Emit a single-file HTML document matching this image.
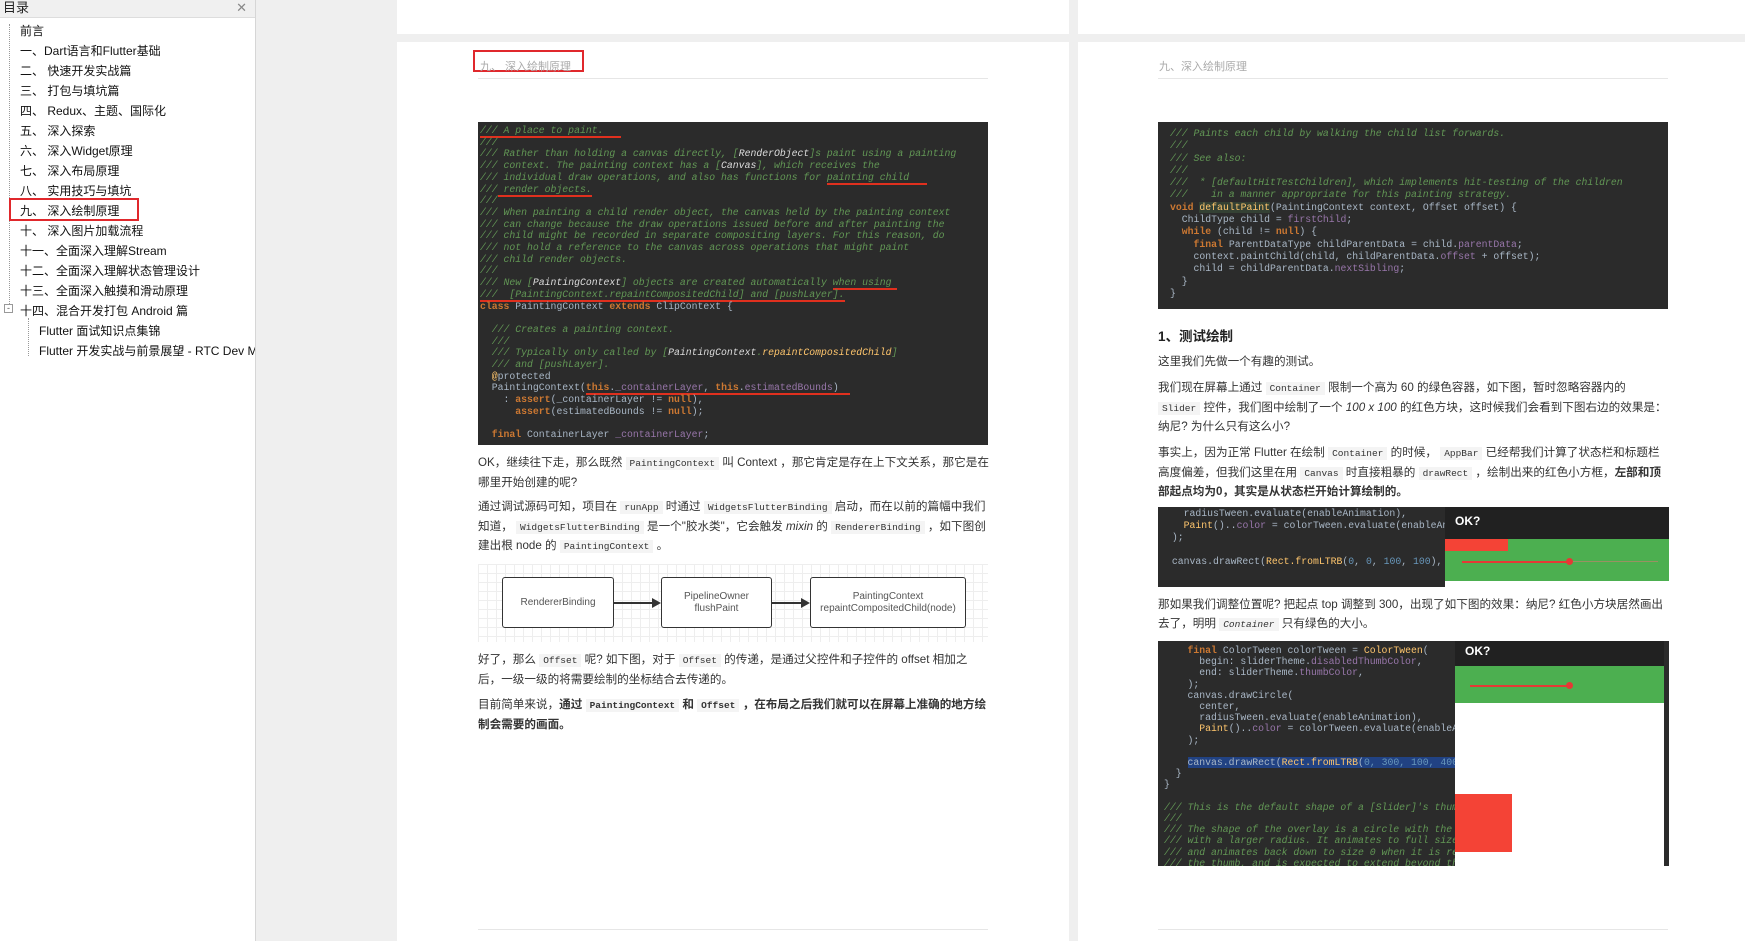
<!DOCTYPE html>
<html><head><meta charset="utf-8">
<style>
*{margin:0;padding:0;box-sizing:border-box}
body{width:1745px;height:941px;overflow:hidden;background:#efefef;font-family:"Liberation Sans","Noto Sans CJK SC",sans-serif;position:relative;color:#333}
.side{position:absolute;left:0;top:0;width:256px;height:941px;background:#fff;border-right:1px solid #d6d6d6;overflow:hidden}
.sh{height:18px;background:#f0f0f0;border-bottom:1px solid #ddd;font-size:13px;line-height:16px;padding-left:3px;color:#222;position:relative}
.sh span{position:absolute;right:8px;top:0;color:#888;font-size:13px}
.it{position:absolute;font-size:12px;color:#111;white-space:nowrap}
.vl{position:absolute;border-left:1px dotted #999}
.page{position:absolute;background:#fff}
.hd{position:absolute;font-size:11px;color:#aaa}
.hl{position:absolute;height:1px;background:#e6e6e6}
.code{position:absolute;background:#2b2b2b;font-family:"Liberation Mono",monospace;font-size:9.8px;line-height:11.7px;color:#a9b7c6;white-space:pre;overflow:hidden}
.c{color:#629755;font-style:italic}
.k{color:#cc7832;font-weight:bold}
.p{color:#9876aa}
.y{color:#ffc66d}
.n{color:#6897bb}
.u{border-bottom:2px solid #e0301e}
.txt{position:absolute;font-size:11.6px;line-height:18.5px;color:#333}
code{font-family:"Liberation Mono",monospace;font-size:9.5px;background:#f4f4f4;padding:1px 4px}
.box{position:absolute;border:1.5px solid #333;border-radius:3px;background:#fff;font-size:10px;color:#555;text-align:center;display:flex;align-items:center;justify-content:center;line-height:12px}
</style></head><body>
<div class="side">
<div class="sh">目录<span>✕</span></div>
<div class="vl" style="left:9px;top:24px;height:286px"></div>
<div class="vl" style="left:28px;top:318px;height:38px"></div>
<div style="position:absolute;left:9px;top:198px;width:130px;height:23px;border:2px solid #e0282c"></div>
<div style="position:absolute;left:4px;top:304px;width:9px;height:9px;border:1px solid #999;background:#fff;font-size:9px;line-height:6px;text-align:center;color:#555">-</div>
<div class="it" style="left:20px;top:22px">前言</div>
<div class="it" style="left:20px;top:42px">一、Dart语言和Flutter基础</div>
<div class="it" style="left:20px;top:62px">二、 快速开发实战篇</div>
<div class="it" style="left:20px;top:82px">三、 打包与填坑篇</div>
<div class="it" style="left:20px;top:102px">四、 Redux、主题、国际化</div>
<div class="it" style="left:20px;top:122px">五、 深入探索</div>
<div class="it" style="left:20px;top:142px">六、 深入Widget原理</div>
<div class="it" style="left:20px;top:162px">七、 深入布局原理</div>
<div class="it" style="left:20px;top:182px">八、 实用技巧与填坑</div>
<div class="it" style="left:20px;top:202px">九、 深入绘制原理</div>
<div class="it" style="left:20px;top:222px">十、 深入图片加载流程</div>
<div class="it" style="left:20px;top:242px">十一、全面深入理解Stream</div>
<div class="it" style="left:20px;top:262px">十二、全面深入理解状态管理设计</div>
<div class="it" style="left:20px;top:282px">十三、全面深入触摸和滑动原理</div>
<div class="it" style="left:20px;top:302px">十四、混合开发打包 Android 篇</div>
<div class="it" style="left:39px;top:322px">Flutter 面试知识点集锦</div>
<div class="it" style="left:39px;top:342px">Flutter 开发实战与前景展望 - RTC Dev M</div>
</div>

<div class="page" style="left:397px;top:0;width:672px;height:34px"></div>
<div class="page" style="left:397px;top:42px;width:672px;height:899px"></div>
<div class="page" style="left:1078px;top:0;width:667px;height:34px"></div>
<div class="page" style="left:1078px;top:42px;width:667px;height:899px"></div>

<div style="position:absolute;left:473px;top:50px;width:111px;height:22px;border:2px solid #e0282c"></div>
<div class="hd" style="left:480px;top:58px">九、 深入绘制原理</div>
<div class="hl" style="left:478px;top:78px;width:510px"></div>

<div class="code" style="left:478px;top:122px;width:510px;height:323px;padding:3px 2px"><span class="c"><span class="u">/// A place to paint.   </span>
///
/// Rather than holding a canvas directly, [<span style="color:#ddd">RenderObject</span>]s paint using a painting
/// context. The painting context has a [<span style="color:#ddd">Canvas</span>], which receives the
/// individual draw operations, and also has functions for <span class="u">painting child   </span>
///<span class="u"> render objects.</span>
///
/// When painting a child render object, the canvas held by the painting context
/// can change because the draw operations issued before and after painting the
/// child might be recorded in separate compositing layers. For this reason, do
/// not hold a reference to the canvas across operations that might paint
/// child render objects.
///
/// New [<span style="color:#ddd">PaintingContext</span>] objects are created automatically <span class="u">when using </span>
<span class="u">///  [PaintingContext.repaintCompositedChild] and [pushLayer].</span></span>
<span class="k">class</span> PaintingContext <span class="k">extends</span> ClipContext {

  <span class="c">/// Creates a painting context.
  ///
  /// Typically only called by [<span style="color:#ddd">PaintingContext</span>.<span class="y">repaintCompositedChild</span>]
  /// and [pushLayer].</span>
  <span class="y">@</span>protected
  PaintingContext(<span class="u"><span class="k">this</span>.<span class="p">_containerLayer</span>, <span class="k">this</span>.<span class="p">estimatedBounds</span>)  </span>
    : <span class="k">assert</span>(_containerLayer != <span class="k">null</span>),
      <span class="k">assert</span>(estimatedBounds != <span class="k">null</span>);

  <span class="k">final</span> ContainerLayer <span class="p">_containerLayer</span>;</div>

<div class="txt" style="left:478px;top:454px;width:512px">OK，继续往下走，那么既然 <code>PaintingContext</code> 叫 Context ，那它肯定是存在上下文关系，那它是在哪里开始创建的呢?</div>
<div class="txt" style="left:478px;top:498px;width:512px">通过调试源码可知，项目在 <code>runApp</code> 时通过 <code>WidgetsFlutterBinding</code> 启动，而在以前的篇幅中我们知道， <code>WidgetsFlutterBinding</code> 是一个"胶水类"，它会触发 <i>mixin</i> 的 <code>RendererBinding</code> ，如下图创建出根 node 的 <code>PaintingContext</code> 。</div>

<div style="position:absolute;left:478px;top:564px;width:510px;height:78px;background-color:#fff;background-image:linear-gradient(#eee 1px,transparent 1px),linear-gradient(90deg,#eee 1px,transparent 1px);background-size:9px 9px"></div>
<div class="box" style="left:502px;top:577px;width:112px;height:51px">RendererBinding</div>
<div class="box" style="left:661px;top:577px;width:111px;height:51px">PipelineOwner<br>flushPaint</div>
<div class="box" style="left:810px;top:577px;width:156px;height:51px">PaintingContext<br>repaintCompositedChild(node)</div>
<div style="position:absolute;left:614px;top:602px;width:42px;height:2px;background:#333"></div>
<div style="position:absolute;left:652px;top:598px;border-left:9px solid #333;border-top:5px solid transparent;border-bottom:5px solid transparent"></div>
<div style="position:absolute;left:772px;top:602px;width:32px;height:2px;background:#333"></div>
<div style="position:absolute;left:801px;top:598px;border-left:9px solid #333;border-top:5px solid transparent;border-bottom:5px solid transparent"></div>

<div class="txt" style="left:478px;top:651px;width:512px">好了，那么 <code>Offset</code> 呢? 如下图，对于 <code>Offset</code> 的传递，是通过父控件和子控件的 offset 相加之后，一级一级的将需要绘制的坐标结合去传递的。</div>
<div class="txt" style="left:478px;top:696px;width:512px">目前简单来说，<b>通过 <code>PaintingContext</code> 和 <code>Offset</code> ，在布局之后我们就可以在屏幕上准确的地方绘制会需要的画面。</b></div>
<div class="hl" style="left:478px;top:929px;width:510px"></div>

<div class="hd" style="left:1159px;top:58px">九、深入绘制原理</div>
<div class="hl" style="left:1158px;top:78px;width:510px"></div>
<div class="code" style="left:1158px;top:122px;width:510px;height:187px;padding:6px 12px;font-size:9.8px;line-height:12.3px"><span class="c">/// Paints each child by walking the child list forwards.
///
/// See also:
///
///  * [defaultHitTestChildren], which implements hit-testing of the children
///    in a manner appropriate for this painting strategy.</span>
<span class="k">void</span> <span class="y" style="background:#344134">defaultPaint</span>(PaintingContext context, Offset offset) {
  ChildType child = <span class="p">firstChild</span>;
  <span class="k">while</span> (child != <span class="k">null</span>) {
    <span class="k">final</span> ParentDataType childParentData = child.<span class="p">parentData</span>;
    context.paintChild(child, childParentData.<span class="p">offset</span> + offset);
    child = childParentData.<span class="p">nextSibling</span>;
  }
}</div>
<div style="position:absolute;left:1158px;top:325px;font-size:13.5px;font-weight:bold;color:#222">1、测试绘制</div>
<div class="txt" style="left:1158px;top:353px;width:512px">这里我们先做一个有趣的测试。</div>
<div class="txt" style="left:1158px;top:379px;width:512px">我们现在屏幕上通过 <code>Container</code> 限制一个高为 60 的绿色容器，如下图，暂时忽略容器内的 <code>Slider</code> 控件，我们图中绘制了一个 <i>100 x 100</i> 的红色方块，这时候我们会看到下图右边的效果是：纳尼? 为什么只有这么小?</div>
<div class="txt" style="left:1158px;top:444px;width:512px">事实上，因为正常 Flutter 在绘制 <code>Container</code> 的时候， <code>AppBar</code> 已经帮我们计算了状态栏和标题栏高度偏差，但我们这里在用 <code>Canvas</code> 时直接粗暴的 <code>drawRect</code> ，绘制出来的红色小方框，<b>左部和顶部起点均为0，其实是从状态栏开始计算绘制的。</b></div>

<div class="code" style="left:1158px;top:507px;width:287px;height:80px;padding:1px 8px;font-size:9.8px;line-height:12px">   radiusTween.evaluate(enableAnimation),
   <span class="y">Paint</span>()..<span class="p">color</span> = colorTween.evaluate(enableAn
 );

 canvas.drawRect(<span class="y">Rect.fromLTRB</span>(<span class="n">0</span>, <span class="n">0</span>, <span class="n">100</span>, <span class="n">100</span>),</div>
<div style="position:absolute;left:1445px;top:507px;width:224px;height:80px;background:#fff"></div>
<div style="position:absolute;left:1445px;top:507px;width:224px;height:32px;background:#212121;color:#fff;font-size:12px;font-weight:bold;padding:7px 10px">OK?</div>
<div style="position:absolute;left:1445px;top:539px;width:224px;height:42px;background:#4caf50"></div>
<div style="position:absolute;left:1445px;top:539px;width:63px;height:12px;background:#f44336"></div>
<div style="position:absolute;left:1462px;top:561px;width:110px;height:2px;background:#e53935"></div>
<div style="position:absolute;left:1566px;top:558px;width:7px;height:7px;border-radius:50%;background:#e53935"></div>
<div style="position:absolute;left:1573px;top:561px;width:85px;height:1px;background:#e57373;opacity:.5"></div>

<div class="txt" style="left:1158px;top:596px;width:512px">那如果我们调整位置呢? 把起点 top 调整到 300，出现了如下图的效果：纳尼? 红色小方块居然画出去了，明明 <code><i>Container</i></code> 只有绿色的大小。</div>

<div class="code" style="left:1158px;top:641px;width:297px;height:225px;padding:4px 6px;font-size:9.8px;line-height:11.2px">    <span class="k">final</span> ColorTween colorTween = <span class="y">ColorTween</span>(
      begin: sliderTheme.<span class="p">disabledThumbColor</span>,
      end: sliderTheme.<span class="p">thumbColor</span>,
    );
    canvas.drawCircle(
      center,
      radiusTween.evaluate(enableAnimation),
      <span class="y">Paint</span>()..<span class="p">color</span> = colorTween.evaluate(enableAnim
    );

    <span style="background:#214283">canvas.drawRect(<span class="y">Rect.fromLTRB</span>(<span class="n">0, 300, 100, 400</span>), </span>
  }
}

<span class="c">/// This is the default shape of a [Slider]'s thumb o
///
/// The shape of the overlay is a circle with the sam
/// with a larger radius. It animates to full size wh
/// and animates back down to size 0 when it is relea
/// the thumb, and is expected to extend beyond the b</span></div>
<div style="position:absolute;left:1455px;top:641px;width:214px;height:225px;background:#fff;border-right:5px solid #2b2b2b"></div>
<div style="position:absolute;left:1455px;top:641px;width:209px;height:25px;background:#212121;color:#fff;font-size:12px;font-weight:bold;padding:3px 10px">OK?</div>
<div style="position:absolute;left:1455px;top:666px;width:209px;height:37px;background:#4caf50"></div>
<div style="position:absolute;left:1470px;top:685px;width:100px;height:2px;background:#e53935"></div>
<div style="position:absolute;left:1566px;top:682px;width:7px;height:7px;border-radius:50%;background:#e53935"></div>
<div style="position:absolute;left:1455px;top:794px;width:57px;height:58px;background:#f44336"></div>
<div class="hl" style="left:1158px;top:929px;width:510px"></div>
</body></html>
